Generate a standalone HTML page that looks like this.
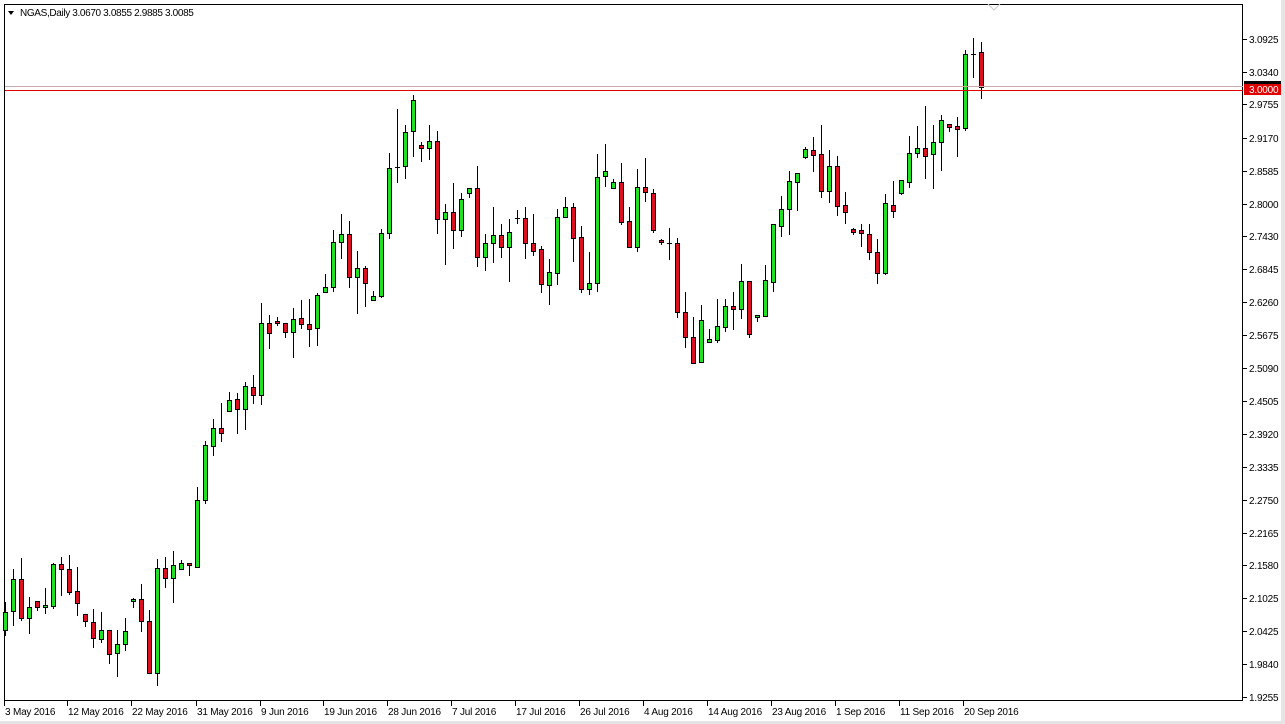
<!DOCTYPE html>
<html><head><meta charset="utf-8">
<style>
html,body{margin:0;padding:0;background:#fff;width:1285px;height:724px;overflow:hidden}
svg{display:block}
text{font-family:"Liberation Sans",sans-serif;font-size:10px;fill:#000;letter-spacing:-0.2px}
</style></head><body>
<svg id="s" width="1285" height="724" xmlns="http://www.w3.org/2000/svg">
<rect x="0" y="0" width="1285" height="724" fill="#fff"/>
<rect x="1281" y="0" width="4" height="724" fill="#e4e4e4"/>
<rect x="0" y="721" width="1285" height="3" fill="#e4e4e4"/>
<rect x="4.5" y="4.5" width="1238" height="696" fill="none" stroke="#000" stroke-width="1"/>
<path d="M988 4 L994 10 L1000 4" fill="none" stroke="#ccc"/>
<g id="c"></g>
<line x1="5" y1="86.5" x2="1243" y2="86.5" stroke="#c8a8a8"/>
<line x1="5" y1="90.5" x2="1243" y2="90.5" stroke="#e00000"/>
<path d="M8 11 L14 11 L11 15 Z" fill="#000"/>
<text x="20" y="16" style="letter-spacing:-0.35px">NGAS,Daily  3.0670 3.0855 2.9885 3.0085</text>
<g id="ax"></g>
<rect x="1244" y="81" width="37" height="4" fill="#000"/>
<rect x="1244" y="84" width="37" height="11" fill="#e00000"/>
<text x="1249" y="93" style="fill:#fff">3.0000</text>
</svg>
<script>
var d=[[630,612,602,635],[611,579,569,625],[579,618,558,620],[618,607,597,633],[601,607,601,610],[607,605,588,613],[606,564,563,608],[564,569,557,595],[569,592,555,594],[591,603,567,615],[614,621,614,626],[622,638,609,647],[639,630,612,642],[630,654,630,663],[653,644,630,676],[644,631,618,650],[601,599,598,607],[599,621,584,631],[621,673,610,673],[673,568,559,685],[568,578,557,587],[578,565,551,602],[569,563,560,569],[563,565,563,575],[567,500,487,567],[500,445,441,503],[446,428,419,455],[428,433,403,441],[411,400,392,411],[399,409,393,433],[409,386,382,429],[387,395,375,403],[395,323,303,404],[323,333,315,348],[321,323,317,325],[323,332,323,337],[332,319,308,357],[318,324,300,328],[324,329,299,346],[328,295,293,345],[292,287,274,292],[287,242,230,291],[242,234,214,258],[234,277,221,287],[277,268,251,313],[268,283,266,306],[300,296,291,300],[296,233,229,297],[233,168,153,238],[167,167,109,182],[166,132,125,178],[131,100,95,156],[145,148,142,161],[148,141,125,159],[141,219,131,233],[219,212,204,264],[212,230,183,248],[230,199,193,236],[193,188,188,197],[188,257,166,266],[257,243,234,270],[243,235,207,262],[235,247,224,257],[247,232,219,281],[218,218,210,223],[218,243,207,258],[243,251,214,255],[249,284,246,292],[285,272,259,304],[273,217,209,284],[217,207,197,217],[207,238,203,261],[237,289,226,292],[289,283,252,294],[283,177,154,291],[176,171,144,186],[188,182,179,188],
[182,222,163,224],[221,247,207,247],[247,187,169,251],[187,192,158,201],[193,230,189,232],[240,242,239,244],[243,243,228,259],[243,312,238,317],[312,337,292,347],[337,363,317,363],[362,320,305,362],[342,339,329,342],[340,326,299,342],[327,306,299,331],[306,309,292,329],[309,281,264,318],[281,334,281,337],[317,315,315,321],[316,280,265,316],[282,224,224,291],[226,209,196,236],[209,181,171,234],[182,173,173,210],[157,149,147,158],[150,155,137,171],[154,191,125,197],[191,166,150,202],[166,206,156,215],[205,212,192,223],[229,232,228,234],[230,233,224,246],[234,252,224,259],[252,273,239,283],[273,203,194,274],[205,211,181,217],[193,180,180,194],[182,153,136,187],[153,148,126,157],[148,156,106,178],[154,142,125,188],[142,120,115,170],[124,127,124,131],[126,129,117,156],[128,54,50,130],[54,54,38,77],[52,87,42,98]];
var s='';
for(var i=0;i<d.length;i++){var c=5+8*i,o=d[i][0],cl=d[i][1],h=d[i][2],l=d[i][3];
var t=Math.min(o,cl),b=Math.max(o,cl);
s+='<line x1="'+(c+0.5)+'" y1="'+h+'" x2="'+(c+0.5)+'" y2="'+(l+1)+'" stroke="#000"/>';
if(b-t<1){s+='<line x1="'+(c-2)+'" y1="'+(t+0.5)+'" x2="'+(c+3)+'" y2="'+(t+0.5)+'" stroke="#000"/>';}
else{var col=cl<o?'#22e022':(cl>o?'#dd1020':'#000');s+='<rect x="'+(c-1.5)+'" y="'+(t+0.5)+'" width="4" height="'+(b-t)+'" fill="'+col+'" stroke="#000"/>';}}
document.getElementById('c').innerHTML=s;
var a='';
var pl=['3.0925','3.0340','2.9755','2.9170','2.8585','2.8000','2.7430','2.6845','2.6260','2.5675','2.5090','2.4505','2.3920','2.3335','2.2750','2.2165','2.1580','2.1025','2.0425','1.9840','1.9255'];
for(var k=0;k<pl.length;k++){var y=Math.round(39+k*32.9);if(k==2)continue;
a+='<line x1="1243" y1="'+(y+0.5)+'" x2="1247" y2="'+(y+0.5)+'" stroke="#000"/><text x="1249" y="'+(y+4)+'">'+pl[k]+'</text>';}
a+='<line x1="1243" y1="104.5" x2="1247" y2="104.5" stroke="#000"/><text x="1249" y="108">2.9755</text>';
var dl=[['3 May 2016',4],['12 May 2016',67],['22 May 2016',131],['31 May 2016',196],['9 Jun 2016',260],['19 Jun 2016',323],['28 Jun 2016',387],['7 Jul 2016',451],['17 Jul 2016',515],['26 Jul 2016',579],['4 Aug 2016',643],['14 Aug 2016',707],['23 Aug 2016',771],['1 Sep 2016',835],['11 Sep 2016',899],['20 Sep 2016',963]];
for(var k=0;k<dl.length;k++){var x=dl[k][1];a+='<line x1="'+(x+0.5)+'" y1="701" x2="'+(x+0.5)+'" y2="706" stroke="#000"/><text x="'+(x+1)+'" y="715">'+dl[k][0]+'</text>';}
document.getElementById('ax').innerHTML=a;
</script>
</body></html>
